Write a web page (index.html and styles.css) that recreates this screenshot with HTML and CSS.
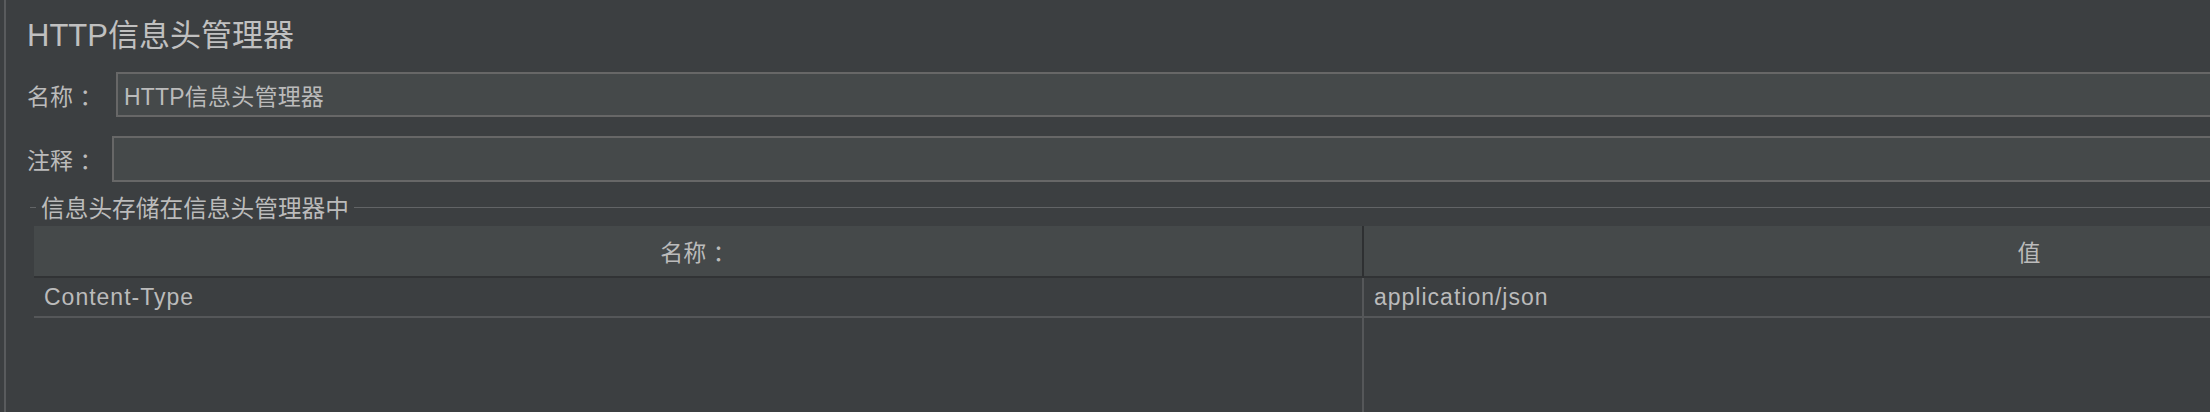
FILE: index.html
```html
<!DOCTYPE html>
<html lang="zh-CN">
<head>
<meta charset="utf-8">
<title>HTTP信息头管理器</title>
<link rel="stylesheet" href="styles.css">
</head>
<body>
<div class="app">
  <div class="panel">
    <h1 class="title">HTTP信息头管理器</h1>
    <div class="form-row form-row--name">
      <label class="form-label form-label--name">名称 ：</label>
      <div class="field">HTTP信息头管理器</div>
    </div>
    <div class="form-row form-row--comment">
      <label class="form-label form-label--comment">注释 ：</label>
      <div class="field field--tall"></div>
    </div>
    <div class="group">
      <div class="group-title">
        <span class="group-line group-line--short"></span>
        <span class="group-text">信息头存储在信息头管理器中</span>
        <span class="group-line group-line--long"></span>
      </div>
      <div class="table">
        <div class="th th--first">名称 ：</div>
        <div class="th">值</div>
        <div class="td td--first">Content-Type</div>
        <div class="td">application/json</div>
        <div class="filler filler--first"></div>
        <div class="filler"></div>
      </div>
    </div>
  </div>
</div>
</body>
</html>
```
FILE: styles.css
```css
* { box-sizing: border-box; }

html, body {
  margin: 0;
  padding: 0;
  width: 2210px;
  height: 412px;
  overflow: hidden;
  background: #3c3f41;
}

body {
  font-family: "Liberation Sans", "Noto Sans CJK SC", sans-serif;
  color: #bbbbbb;
}

.app {
  width: 2800px;
  height: 412px;
  padding-left: 4px;
}

.panel {
  height: 412px;
  border-left: 2px solid #595b5d;
  display: flex;
  flex-direction: column;
}

.title {
  margin: 6px 0 0 0;
  height: 52px;
  padding-left: 21px;
  display: flex;
  align-items: center;
  font-size: 31px;
  font-weight: normal;
  letter-spacing: 0;
  color: #c0c0c0;
}

.form-row {
  display: flex;
  align-items: center;
  font-size: 23px;
}

.form-row--name {
  margin-top: 14px;
  height: 45px;
}

.form-row--comment {
  margin-top: 19px;
  height: 46px;
}

.form-label {
  padding-left: 21px;
  flex: none;
  white-space: nowrap;
}

.form-label--name { width: 110px; }
.form-label--comment { width: 106px; }

.field {
  flex: 1;
  height: 45px;
  background: #45494a;
  border: 2px solid #676767;
  display: flex;
  align-items: center;
  padding-left: 6px;
  font-size: 23px;
  letter-spacing: 0.2px;
}

.field--tall { height: 46px; }

.group {
  margin-top: 13px;
  flex: 1;
  display: flex;
  flex-direction: column;
}

.group-title {
  height: 24px;
  display: flex;
  align-items: center;
  font-size: 23.7px;
  padding-left: 24px;
}

.group-line {
  height: 1px;
  background: #626466;
}

.group-line--short {
  width: 6px;
  margin-right: 5px;
}

.group-line--long {
  flex: 1;
  margin-left: 5px;
}

.group-text { white-space: nowrap; }

.table {
  margin-top: 7px;
  margin-left: 28px;
  flex: 1;
  display: grid;
  grid-template-columns: 1330px 1330px;
  grid-template-rows: 52px 40px 1fr;
  font-size: 23px;
}

.th {
  background: #45494a;
  border-bottom: 2px solid #313335;
  display: flex;
  align-items: center;
  justify-content: center;
  white-space: nowrap;
}

.th--first {
  border-right: 2px solid #2e3032;
}

.td {
  border-bottom: 2px solid #555759;
  display: flex;
  align-items: center;
  padding-left: 10px;
  letter-spacing: 1px;
}

.td--first,
.filler--first {
  border-right: 2px solid #555759;
}
```
